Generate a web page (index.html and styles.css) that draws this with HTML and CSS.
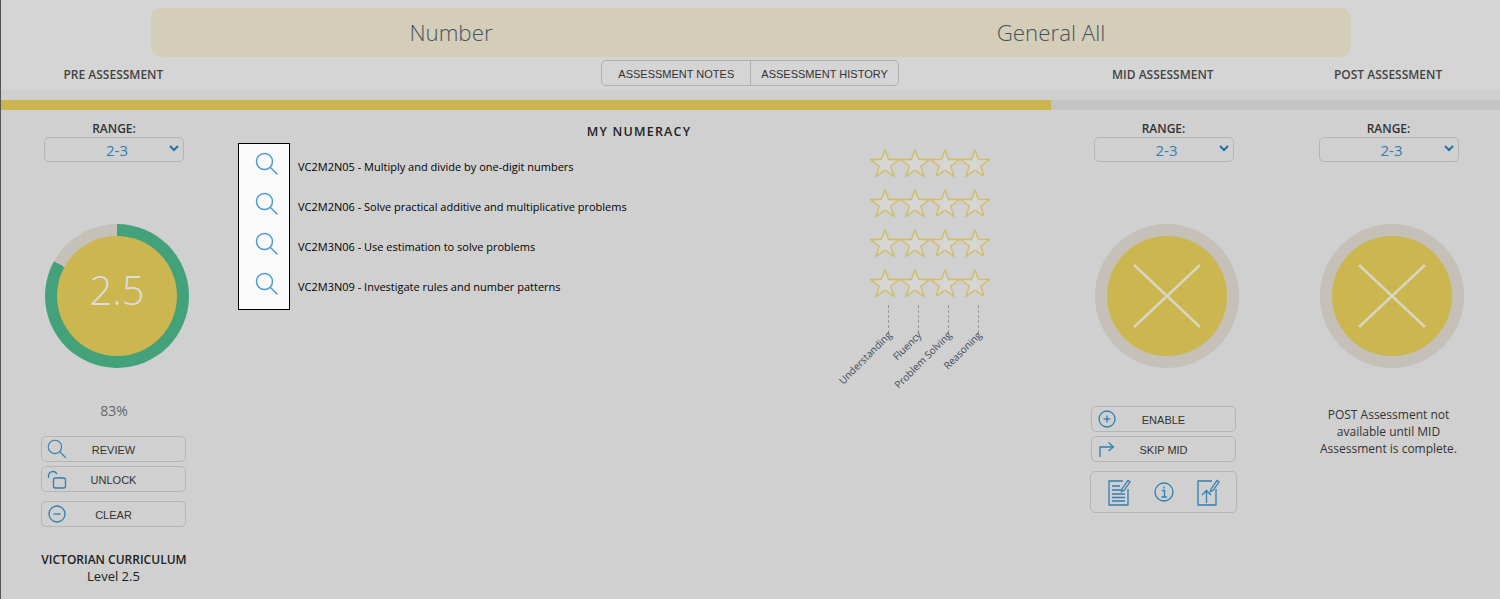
FILE: index.html
```html
<!DOCTYPE html>
<html lang="en">
<head>
    <meta charset="UTF-8">
    <meta name="viewport" content="width=device-width, initial-scale=1.0">
    <title>My Numeracy Assessment</title>
    <link rel="stylesheet" href="styles.css">
</head>
<body>
    <svg class="icon-defs" width="0" height="0">
        <symbol id="star" viewBox="0 0 30 28">
            <polygon points="15,0.8 18.6,10.5 29.5,10.5 20.8,17.2 24,27.3 15,21.2 6,27.3 9.2,17.2 0.5,10.5 11.4,10.5"></polygon>
        </symbol>
        <symbol id="search" viewBox="0 0 24 24">
            <circle cx="9.5" cy="9.5" r="8"></circle>
            <line x1="15.2" y1="15.2" x2="22.5" y2="22.5"></line>
        </symbol>
        <symbol id="cross" viewBox="0 0 70 66">
            <line x1="2" y1="2" x2="68" y2="64"></line>
            <line x1="68" y1="2" x2="2" y2="64"></line>
        </symbol>
    </svg>

    <header class="top">
        <div class="banner">
            <div>Number</div>
            <div>General All</div>
        </div>
        <div class="top-row">
            <div class="top-label pre-label">PRE ASSESSMENT</div>
            <div class="btn-group">
                <button class="btn-notes">ASSESSMENT NOTES</button>
                <button class="btn-history">ASSESSMENT HISTORY</button>
            </div>
            <div class="top-label mid-label">MID ASSESSMENT</div>
            <div class="top-label post-label">POST ASSESSMENT</div>
        </div>
    </header>
    <div class="band"></div>
    <div class="progress"><div class="progress-fill"></div></div>

    <main class="columns">
        <section class="col col-pre">
            <div class="range-label">RANGE:</div>
            <div class="range-select">2-3
                <svg class="chevron" width="10" height="7" viewBox="0 0 10 7"><polyline points="1,1 5,5 9,1"></polyline></svg>
            </div>
            <div class="ring ring-score">
                <div class="ring-inner">2.5</div>
            </div>
            <div class="percent">83%</div>
            <div class="actions">
                <button class="action">
                    <svg class="action-icon" width="20" height="20"><use href="#search"></use></svg>
                    <span>REVIEW</span>
                </button>
                <button class="action">
                    <svg class="action-icon" width="20" height="20" viewBox="0 0 20 20">
                        <path d="M1.5 9 V7 A4.5 4.5 0 0 1 10 5"></path>
                        <rect x="6.5" y="9" width="12" height="10" rx="2"></rect>
                    </svg>
                    <span>UNLOCK</span>
                </button>
                <button class="action action-spaced">
                    <svg class="action-icon" width="20" height="20" viewBox="0 0 20 20">
                        <circle cx="10" cy="10" r="8"></circle>
                        <line x1="6.5" y1="10" x2="13.5" y2="10"></line>
                    </svg>
                    <span>CLEAR</span>
                </button>
            </div>
            <div class="curriculum">VICTORIAN CURRICULUM</div>
            <div class="level">Level 2.5</div>
        </section>

        <section class="col-main">
            <h2 class="main-title">MY NUMERACY</h2>
            <div class="skills">
                <div class="skill-icons">
                    <svg width="24" height="24"><use href="#search"></use></svg>
                    <svg width="24" height="24"><use href="#search"></use></svg>
                    <svg width="24" height="24"><use href="#search"></use></svg>
                    <svg width="24" height="24"><use href="#search"></use></svg>
                </div>
                <ul class="skill-list">
                    <li>VC2M2N05 - Multiply and divide by one-digit numbers</li>
                    <li>VC2M2N06 - Solve practical additive and multiplicative problems</li>
                    <li>VC2M3N06 - Use estimation to solve problems</li>
                    <li>VC2M3N09 - Investigate rules and number patterns</li>
                </ul>
                <div class="ratings">
                    <div class="star-row">
                        <svg width="30" height="28"><use href="#star"></use></svg>
                        <svg width="30" height="28"><use href="#star"></use></svg>
                        <svg width="30" height="28"><use href="#star"></use></svg>
                        <svg width="30" height="28"><use href="#star"></use></svg>
                    </div>
                    <div class="star-row">
                        <svg width="30" height="28"><use href="#star"></use></svg>
                        <svg width="30" height="28"><use href="#star"></use></svg>
                        <svg width="30" height="28"><use href="#star"></use></svg>
                        <svg width="30" height="28"><use href="#star"></use></svg>
                    </div>
                    <div class="star-row">
                        <svg width="30" height="28"><use href="#star"></use></svg>
                        <svg width="30" height="28"><use href="#star"></use></svg>
                        <svg width="30" height="28"><use href="#star"></use></svg>
                        <svg width="30" height="28"><use href="#star"></use></svg>
                    </div>
                    <div class="star-row">
                        <svg width="30" height="28"><use href="#star"></use></svg>
                        <svg width="30" height="28"><use href="#star"></use></svg>
                        <svg width="30" height="28"><use href="#star"></use></svg>
                        <svg width="30" height="28"><use href="#star"></use></svg>
                    </div>
                    <div class="axes">
                        <div class="axis"><span>Understanding</span></div>
                        <div class="axis"><span>Fluency</span></div>
                        <div class="axis"><span>Problem Solving</span></div>
                        <div class="axis"><span>Reasoning</span></div>
                    </div>
                </div>
            </div>
        </section>

        <section class="col col-mid">
            <div class="range-label">RANGE:</div>
            <div class="range-select">2-3
                <svg class="chevron" width="10" height="7" viewBox="0 0 10 7"><polyline points="1,1 5,5 9,1"></polyline></svg>
            </div>
            <div class="ring">
                <div class="ring-inner"><svg class="cross" width="70" height="66"><use href="#cross"></use></svg></div>
            </div>
            <div class="actions actions-mid">
                <button class="action">
                    <svg class="action-icon" width="20" height="20" viewBox="0 0 20 20">
                        <circle cx="10" cy="10" r="8"></circle>
                        <line x1="6.5" y1="10" x2="13.5" y2="10"></line>
                        <line x1="10" y1="6.5" x2="10" y2="13.5"></line>
                    </svg>
                    <span>ENABLE</span>
                </button>
                <button class="action">
                    <svg class="action-icon" width="20" height="20" viewBox="0 0 20 20">
                        <path d="M3 18 V8 H16"></path>
                        <path d="M11.5 3.5 L16.5 8 L11.5 12"></path>
                    </svg>
                    <span>SKIP MID</span>
                </button>
            </div>
            <div class="tools">
                <svg width="24" height="28" viewBox="0 0 24 28">
                    <path d="M16 3 H2 V27 H21 V11"></path>
                    <path d="M5 8 H13 M5 12 H18 M5 16 H18 M5 19.5 H18 M5 23 H18"></path>
                    <path class="tool-fill" d="M15 11 L21 2.5 L23 4 L17 12.5 L14.5 13.5 Z"></path>
                </svg>
                <svg width="22" height="22" viewBox="0 0 22 22">
                    <circle cx="11" cy="11" r="9"></circle>
                    <path d="M9 9.5 H11.5 V16 M8.5 16 H14"></path>
                    <path d="M11 5.5 V7.5"></path>
                </svg>
                <svg width="24" height="28" viewBox="0 0 24 28">
                    <path d="M15 3 H1 V27 H19 V11"></path>
                    <path d="M9.5 25 V13 M5 17 L9.5 12.5 L14 17"></path>
                    <path class="tool-fill" d="M14 11 L20 2.5 L22 4 L16 12.5 L13.5 13.5 Z"></path>
                </svg>
            </div>
        </section>

        <section class="col col-post">
            <div class="range-label">RANGE:</div>
            <div class="range-select">2-3
                <svg class="chevron" width="10" height="7" viewBox="0 0 10 7"><polyline points="1,1 5,5 9,1"></polyline></svg>
            </div>
            <div class="ring">
                <div class="ring-inner"><svg class="cross" width="70" height="66"><use href="#cross"></use></svg></div>
            </div>
            <p class="post-note">POST Assessment not available until MID Assessment is complete.</p>
        </section>
    </main>
</body>
</html>
```

FILE: styles.css
```css
html, body {
    height: 100%;
}

body {
    font-family: 'Open Sans', sans-serif;
    margin: 0;
    background-color: #d0d0d0;
    color: #333;
    border-left: 1px solid #555;
    overflow: hidden;
}

button {
    font-family: 'Liberation Sans', Arial, sans-serif;
    font-size: 11px;
    color: #333;
    background: transparent;
    cursor: pointer;
}

.icon-defs {
    position: absolute;
}

/* header */
.top {
    height: 90px;
    background-color: #d5d5d5;
    padding-top: 8px;
    box-sizing: border-box;
}

.banner {
    margin-left: 150px;
    width: 1200px;
    height: 49px;
    display: flex;
    background-color: #d4cdb8;
    border-radius: 10px;
    font-size: 22.3px;
    font-weight: 300;
    line-height: 49px;
    color: #465462;
}

.banner div {
    flex: 1;
    text-align: center;
}

.top-row {
    display: flex;
    align-items: center;
    margin-top: 3px;
    height: 26px;
}

.top-label {
    font-size: 12px;
    font-weight: 600;
    padding-top: 2px;
    color: #444;
    text-align: center;
}

.pre-label {
    width: 225px;
    margin-right: 1px;
}

.mid-label {
    width: 225px;
    margin-left: 151px;
}

.post-label {
    width: 224px;
    margin-left: 1px;
}

.btn-group {
    margin-left: 374px;
    width: 299px;
    height: 26px;
    box-sizing: border-box;
    display: flex;
    border: 1px solid #b0b0b0;
    border-radius: 5px;
}

.btn-group button {
    border: none;
    padding: 2px 0 0;
}

.btn-group .btn-notes {
    width: 148px;
    padding-left: 1px;
}

.btn-group .btn-history {
    flex: 1;
    border-left: 1px solid #b0b0b0;
}

.band {
    height: 10px;
    background-color: #cfcfcf;
}

.progress {
    height: 10px;
    background-color: #c4c4c4;
}

.progress-fill {
    width: 1050px;
    height: 100%;
    background-color: #cbb54e;
}

/* columns */
.columns {
    display: flex;
}

.col {
    display: flex;
    flex-direction: column;
    align-items: center;
    padding-top: 9px;
}

.col-pre {
    width: 226px;
}

.col-main {
    width: 824px;
}

.col-mid {
    width: 225px;
}

.col-post {
    width: 223px;
    margin-left: 1px;
}

.range-label {
    font-size: 12px;
    font-weight: 600;
    line-height: 18px;
    padding-top: 1px;
    margin-bottom: -1px;
    color: #333;
}

.range-select {
    position: relative;
    width: 140px;
    height: 25px;
    box-sizing: border-box;
    border: 1px solid #b5b5b5;
    border-radius: 5px;
    padding-left: 6px;
    font-size: 15px;
    line-height: 25px;
    text-align: center;
    color: #2f7fb0;
}

.chevron {
    position: absolute;
    right: 4px;
    top: 7px;
    fill: none;
    stroke: #2272a3;
    stroke-width: 2;
}

.ring {
    margin-top: 62px;
    margin-left: 7px;
    width: 144px;
    height: 144px;
    border-radius: 50%;
    background-color: #c5c0b8;
    display: flex;
    align-items: center;
    justify-content: center;
}

.ring-score {
    margin-left: 6px;
    background: conic-gradient(#43a27a 0 83%, #c5c0b8 83% 100%);
}

.ring-inner {
    width: 120px;
    height: 120px;
    border-radius: 50%;
    background-color: #cbb650;
    color: #ddd;
    font-size: 40px;
    font-weight: 300;
    display: flex;
    align-items: center;
    justify-content: center;
}

.ring-score .ring-inner {
    height: 106px;
    padding-bottom: 14px;
}

.cross {
    fill: none;
    stroke: #d9d5c3;
    stroke-width: 2.5;
}

.percent {
    margin-top: 34px;
    font-size: 14px;
    line-height: 18px;
    color: #666;
}

.actions {
    margin-top: 16px;
    display: flex;
    flex-direction: column;
    gap: 4px;
}

.col-pre .actions {
    margin-left: -1px;
}

.actions-mid {
    margin-top: 38px;
}

.action {
    width: 145px;
    height: 26px;
    padding: 0 5px;
    display: grid;
    grid-template-columns: 1fr auto 1fr;
    align-items: center;
    border: 1px solid #b5b5b5;
    border-radius: 5px;
}

.action span {
    padding-top: 2px;
}

.action-spaced {
    margin-top: 5px;
}

.action-icon {
    fill: none;
    stroke: #2f7fb0;
    stroke-width: 1.3;
}

.curriculum {
    margin-top: 24px;
    font-size: 12px;
    font-weight: 600;
    line-height: 17px;
    color: #222;
}

.level {
    margin-left: -1px;
    font-size: 13px;
    line-height: 17px;
    color: #222;
}

/* middle */
.main-title {
    margin: 13px 0 2px;
    font-size: 12.5px;
    font-weight: 600;
    line-height: 18px;
    letter-spacing: 1.2px;
    text-align: center;
    color: #222;
}

.skills {
    display: flex;
    margin-left: 11px;
    margin-right: 61px;
    justify-content: space-between;
}

.skill-icons {
    width: 52px;
    height: 167px;
    box-sizing: border-box;
    border: 1px solid #000;
    background-color: #fafafa;
    padding: 8px 0 0 6px;
    display: flex;
    flex-direction: column;
    align-items: center;
    gap: 16px;
    fill: none;
    stroke: #4a9bd0;
    stroke-width: 1.5;
}

.skill-list {
    list-style: none;
    margin: 4px 0 0 8px;
    padding: 0;
    flex: 1;
    font-size: 11px;
    color: #000;
}

.skill-list li {
    height: 40px;
    line-height: 40px;
}

.ratings {
    padding-top: 6px;
    display: flex;
    flex-direction: column;
    gap: 12px;
}

.star-row {
    display: flex;
    fill: #d6d6d6;
    stroke: #d1bd66;
    stroke-width: 1.4;
}

.axes {
    display: flex;
    margin-top: -4px;
}

.axis {
    position: relative;
    width: 30px;
    height: 28px;
    box-sizing: border-box;
    margin-left: 18px;
    margin-right: -18px;
    border-left: 1px dashed #999;
}

.axis span {
    position: absolute;
    right: 34px;
    top: calc(100% - 5px);
    white-space: nowrap;
    font-size: 10px;
    line-height: 14px;
    color: #3f4a5c;
    transform: rotate(-45deg);
    transform-origin: right top;
}

/* right side */
.tools {
    margin-top: 9px;
    width: 147px;
    height: 42px;
    box-sizing: border-box;
    border: 1px solid #b5b5b5;
    border-radius: 5px;
    display: flex;
    align-items: center;
    justify-content: center;
    gap: 22px;
    fill: none;
    stroke: #2f7fb0;
    stroke-width: 1.3;
}

.tool-fill {
    fill: #d0d0d0;
}

.post-note {
    margin: 38px 0 0;
    width: 150px;
    font-size: 12px;
    line-height: 17px;
    text-align: center;
    color: #333;
}
```
